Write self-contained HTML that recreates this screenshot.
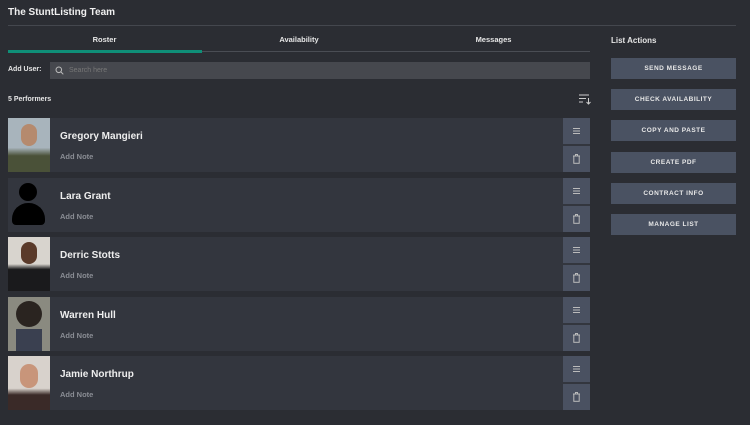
<!DOCTYPE html>
<html><head><style>
body{margin:0;width:750px;height:425px;background:#2b2d33;font-family:"Liberation Sans",sans-serif;color:#e6e6e6;position:relative;overflow:hidden}
.a{position:absolute}
.title{left:8px;top:7px;font-size:10px;font-weight:bold;color:#f0f0f0}
.row{position:absolute;left:8px;width:582px;height:54px;background:#33363e}
.ph{position:absolute;left:0;top:0;width:42px;height:54px}
.name{position:absolute;left:52px;top:13px;font-size:10px;font-weight:bold;color:#eee}
.note{position:absolute;left:52px;top:34px;font-size:7.5px;font-weight:bold;color:#8a8d94}
.act{position:absolute;left:555px;width:27px;height:26px;background:#4a5161}
.btn{position:absolute;left:611px;width:125px;height:21px;background:#4a5262;color:#e8e8e8;font-size:6.5px;font-weight:bold;letter-spacing:.5px;text-align:center;line-height:21px}
</style></head><body>
<div class="a title">The StuntListing Team</div>
<div class="a" style="left:8px;top:25px;width:728px;height:1px;background:#44474e"></div>
<div class="a" style="left:8px;top:35px;width:193px;text-align:center;font-size:7.5px;font-weight:bold">Roster</div>
<div class="a" style="left:201px;top:35px;width:196px;text-align:center;font-size:7.5px;font-weight:bold">Availability</div>
<div class="a" style="left:397px;top:35px;width:193px;text-align:center;font-size:7.5px;font-weight:bold">Messages</div>
<div class="a" style="left:8px;top:51px;width:582px;height:1px;background:#4a4d54"></div>
<div class="a" style="left:8px;top:50px;width:194px;height:3px;background:#0f8f78"></div>
<div class="a" style="left:8px;top:66px;font-size:7px;font-weight:bold">Add User:</div>
<div class="a" style="left:50px;top:62px;width:540px;height:17px;background:#46484e"></div>
<svg class="a" style="left:55px;top:66px" width="9" height="9" viewBox="0 0 9 9"><circle cx="3.8" cy="3.8" r="2.8" fill="none" stroke="#bbb" stroke-width="1"/><line x1="6" y1="6" x2="8.3" y2="8.3" stroke="#bbb" stroke-width="1"/></svg>
<div class="a" style="left:69px;top:67px;font-size:7px;color:#777">Search here</div>
<div class="a" style="left:8px;top:96px;font-size:7px;font-weight:bold">5 Performers</div>
<svg class="a" style="left:579px;top:94px" width="12" height="11" viewBox="0 0 12 11"><g stroke="#ccc" stroke-width="1"><line x1="0" y1="1" x2="10" y2="1"/><line x1="0" y1="4.5" x2="7" y2="4.5"/><line x1="0" y1="8" x2="4" y2="8"/><line x1="9.5" y1="4" x2="9.5" y2="10"/><polyline points="7.5,8 9.5,10 11.5,8" fill="none"/></g></svg>
<div class="a" style="left:611px;top:36px;font-size:8px;font-weight:bold">List Actions</div>
<div class="btn" style="top:58px">SEND MESSAGE</div>
<div class="btn" style="top:89px">CHECK AVAILABILITY</div>
<div class="btn" style="top:120px">COPY AND PASTE</div>
<div class="btn" style="top:152px">CREATE PDF</div>
<div class="btn" style="top:183px">CONTRACT INFO</div>
<div class="btn" style="top:214px">MANAGE LIST</div>

<div class="row" style="top:118px"><div class="ph" style="background:linear-gradient(#a8b4bc 0,#a8b4bc 55%,#4a5138 70%)"><div class="a" style="left:13px;top:6px;width:16px;height:22px;border-radius:8px;background:#b58a6e"></div></div><div class="name">Gregory Mangieri</div><div class="note">Add Note</div></div>
<div class="row" style="top:178px"><div class="ph"><div class="a" style="left:11px;top:5px;width:18px;height:18px;border-radius:9px;background:#000"></div><div class="a" style="left:4px;top:25px;width:33px;height:22px;border-radius:16px 16px 4px 4px;background:#000"></div></div><div class="name">Lara Grant</div><div class="note">Add Note</div></div>
<div class="row" style="top:237px"><div class="ph" style="background:linear-gradient(#d8d4ce 0,#d8d4ce 50%,#1a1a1c 60%)"><div class="a" style="left:13px;top:5px;width:16px;height:22px;border-radius:8px;background:#5a3a2a"></div></div><div class="name">Derric Stotts</div><div class="note">Add Note</div></div>
<div class="row" style="top:297px"><div class="ph" style="background:#8a8a80"><div class="a" style="left:8px;top:4px;width:26px;height:26px;border-radius:13px;background:#2a2420"></div><div class="a" style="left:8px;top:32px;width:26px;height:22px;background:#3a4050"></div></div><div class="name">Warren Hull</div><div class="note">Add Note</div></div>
<div class="row" style="top:356px"><div class="ph" style="background:linear-gradient(#d8d2cc 0,#d8d2cc 60%,#3a2a28 72%)"><div class="a" style="left:12px;top:8px;width:18px;height:24px;border-radius:9px;background:#c8957a"></div></div><div class="name">Jamie Northrup</div><div class="note">Add Note</div></div>

<div id="acts"></div>
<script>
var tops=[118,178,237,297,356],h='';
tops.forEach(function(t){
h+='<div class="act a" style="left:563px;top:'+t+'px"><svg style="position:absolute;left:10px;top:10px" width="7" height="6"><g stroke="#bbb" stroke-width="1"><line x1="0" y1="0.5" x2="7" y2="0.5"/><line x1="0" y1="3" x2="7" y2="3"/><line x1="0" y1="5.5" x2="7" y2="5.5"/></g></svg></div>';
h+='<div class="act a" style="left:563px;top:'+(t+28)+'px"><svg style="position:absolute;left:9px;top:8px" width="9" height="10"><g stroke="#bbb" stroke-width="1" fill="none"><line x1="1" y1="2" x2="8" y2="2"/><rect x="3.5" y="0.5" width="2" height="1.5"/><rect x="1.8" y="2" width="5.4" height="7.3"/></g></svg></div>';
});
document.getElementById('acts').innerHTML=h;
</script>
</body></html>
